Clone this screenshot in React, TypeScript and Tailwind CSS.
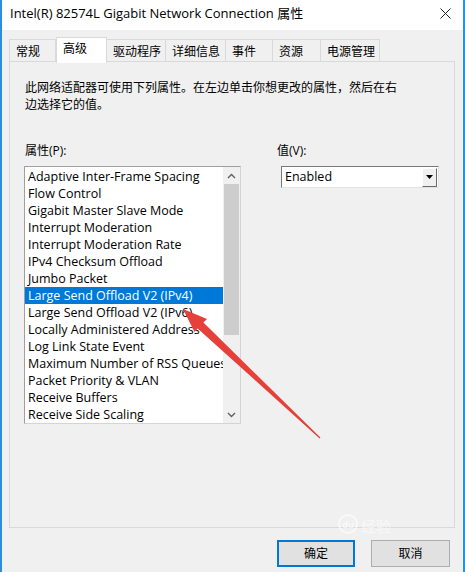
import React from 'react';

const tabs = [
  { label: '常规', w: 'w-[47px]' },
  { label: '高级', w: 'w-[51px]', active: true },
  { label: '驱动程序', w: 'w-[59px]' },
  { label: '详细信息', w: 'w-[60px]' },
  { label: '事件', w: 'w-[47px]' },
  { label: '资源', w: 'w-[48px]' },
  { label: '电源管理', w: 'w-[59px]' },
];

const properties = [
  'Adaptive Inter-Frame Spacing',
  'Flow Control',
  'Gigabit Master Slave Mode',
  'Interrupt Moderation',
  'Interrupt Moderation Rate',
  'IPv4 Checksum Offload',
  'Jumbo Packet',
  'Large Send Offload V2 (IPv4)',
  'Large Send Offload V2 (IPv6)',
  'Locally Administered Address',
  'Log Link State Event',
  'Maximum Number of RSS Queues',
  'Packet Priority & VLAN',
  'Receive Buffers',
  'Receive Side Scaling',
];

const selected = 'Large Send Offload V2 (IPv4)';

const Chevron = ({ up }: { up?: boolean }) => (
  <svg width="9" height="6" viewBox="0 0 9 6">
    <path d={up ? 'M1 5 L4.5 1.5 L8 5' : 'M1 1 L4.5 4.5 L8 1'} fill="none" stroke="#606060" strokeWidth={1.4} />
  </svg>
);

const App = () => {
  return (
    <div className="relative w-[465px] h-[572px] overflow-hidden bg-[#f0f0f0] border-l-2 border-r-2 border-[#2a8fdc] font-['Open_Sans','Noto_Sans_CJK_SC',sans-serif] text-[12px] text-black">
      {/* Title bar */}
      <div className="h-[30px] bg-white flex items-center justify-between pl-[8px] pr-[12px]">
        <span className="text-[13px] leading-none -mt-[3px]">Intel(R) 82574L Gigabit Network Connection 属性</span>
        <svg width="11" height="11" viewBox="0 0 11 11" className="-mt-[4px]">
          <path d="M0.5 0.5 L10.5 10.5 M10.5 0.5 L0.5 10.5" stroke="#222" strokeWidth={1} />
        </svg>
      </div>

      {/* Tabs */}
      <div className="relative z-10 mt-[7px] ml-[7px] h-[25px] flex items-end">
        {tabs.map((t) =>
          t.active ? (
            <div
              key={t.label}
              className={`${t.w} h-[26px] -mb-px bg-white border border-b-0 border-[#d9d9d9] pl-[6px] pt-[2px] leading-[17px]`}
            >
              {t.label}
            </div>
          ) : (
            <div
              key={t.label}
              className={`${t.w} h-[23px] border border-b-0 border-l-0 first:border-l border-[#d9d9d9] pl-[6px] pt-[3px] leading-[17px]`}
            >
              {t.label}
            </div>
          )
        )}
      </div>

      {/* Tab panel */}
      <div className="-mt-px ml-[7px] w-[446px] h-[467px] border border-[#d9d9d9] bg-[#f0f0f0] pl-[14px] pt-[17px]">
        <p className="ml-px leading-[17px] w-[400px]">
          此网络适配器可使用下列属性。在左边单击你想更改的属性，然后在右
          <br />
          边选择它的值。
        </p>

        <div className="flex mt-[29px]">
          {/* Property list */}
          <div className="w-[217px]">
            <div className="ml-px leading-[17px]">属性(P):</div>
            <div className="mt-[7px] h-[258px] border border-[#a0a0a0] border-r-[#d4d4d4] border-b-[#d4d4d4] bg-white flex">
              <div className="flex-1 min-w-0 pt-px text-[12.5px]">
                {properties.map((p) => (
                  <div
                    key={p}
                    className={`h-[17px] leading-[17px] pl-[3px] whitespace-nowrap overflow-hidden ${
                      p === selected ? 'bg-[#0078d7] text-white' : ''
                    }`}
                  >
                    {p}
                  </div>
                ))}
              </div>
              <div className="w-[17px] bg-[#f0f0f0] flex flex-col">
                <div className="h-[17px] flex items-center justify-center">
                  <Chevron up />
                </div>
                <div className="h-[151px] mx-px bg-[#cdcdcd]" />
                <div className="flex-1" />
                <div className="h-[17px] flex items-center justify-center">
                  <Chevron />
                </div>
              </div>
            </div>
          </div>

          {/* Value */}
          <div className="ml-[36px]">
            <div className="leading-[17px]">值(V):</div>
            <div className="mt-[7px] ml-[4px] w-[158px] h-[22px] bg-white border border-[#7a7a7a] border-r-[#e3e3e3] border-b-[#e3e3e3] flex items-center justify-between">
              <span className="pl-[3px] leading-none text-[12.5px]">Enabled</span>
              <div className="w-[15px] h-[19px] mr-px bg-[#f0f0f0] border border-white border-r-[#696969] border-b-[#696969] flex items-center justify-center">
                <svg width="7" height="4" viewBox="0 0 7 4">
                  <path d="M0 0 L7 0 L3.5 4 Z" fill="#000" />
                </svg>
              </div>
            </div>
          </div>
        </div>
      </div>

      {/* Buttons */}
      <div className="mt-[12px] pr-[13px] flex justify-end gap-[16px]">
        <button className="w-[78px] h-[27px] bg-[#e1e1e1] border-2 border-[#0078d7] leading-none">确定</button>
        <button className="w-[79px] h-[27px] bg-[#e1e1e1] border border-[#adadad] leading-none">取消</button>
      </div>

      {/* Annotation arrow */}
      <svg className="absolute left-0 top-0 pointer-events-none" width="465" height="572" viewBox="0 0 465 572">
        <polygon
          points="181,309 205,319 201.4,322.5 318.4,437.6 317.6,438.4 195.6,328.4 192.5,332"
          fill="#e6403a"
        />
      </svg>

      {/* Watermark */}
      <div className="absolute left-[336px] top-[514px] pointer-events-none text-white/60 flex flex-col items-start">
        <div className="flex items-end gap-[3px] leading-none">
          <span className="w-[20px] h-[20px] rounded-full border-2 border-white/60 text-[9px] font-bold flex items-center justify-center">du</span>
          <span className="text-[15px]">经验</span>
        </div>
      </div>
    </div>
  );
};

export default App;
